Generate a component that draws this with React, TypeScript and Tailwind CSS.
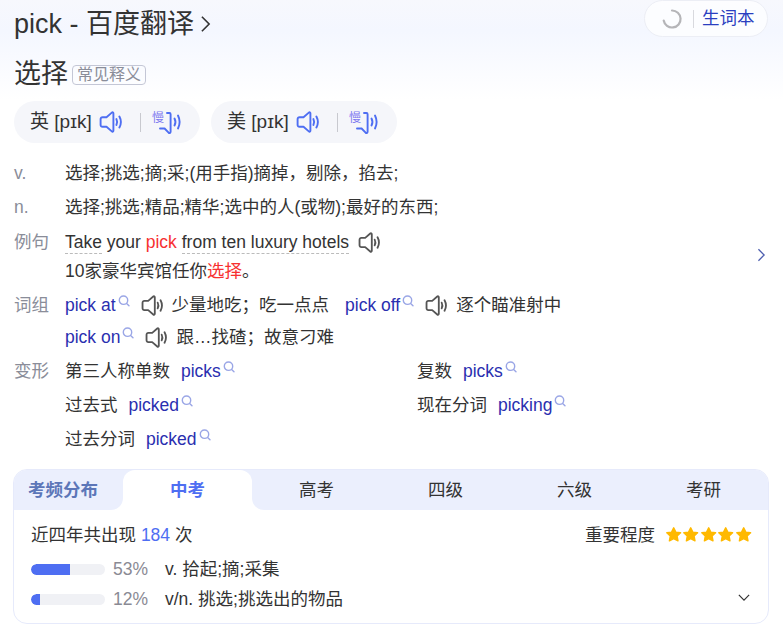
import { Fragment } from 'react'

function Speaker({ className }: { className: string }) {
  return (
    <svg viewBox="0 0 24 24" fill="none" stroke="currentColor" className={className}>
      <path
        d="M3.5 7.2h4L12.8 2.6c.7-.6 1.6-.2 1.6.7v17.4c0 .9-.9 1.3-1.6.7L7.5 16.8h-4c-1.1 0-1.9-.8-1.9-1.9V9.1c0-1.1.8-1.9 1.9-1.9z"
        strokeWidth="1.9"
        strokeLinejoin="round"
      />
      <path d="M17.4 9c1 2 1 4 0 6" strokeWidth="1.9" strokeLinecap="round" />
      <path d="M20.4 6.5c1.9 3.5 1.9 7.5 0 11" strokeWidth="1.9" strokeLinecap="round" />
    </svg>
  )
}

function SlowSpeaker() {
  return (
    <span className="relative block h-[26px] w-[31px]">
      <span className="absolute left-0 top-[2px] text-[12px] leading-[14px] text-[#7d78f0]">慢</span>
      <svg viewBox="0 0 31 26" fill="none" stroke="currentColor" className="absolute inset-0 h-[26px] w-[31px] text-[#4e6ef2]">
        <path d="M15 4h2.4c.8 0 1.2.5 1.2 1.2v17.6c0 1.3-1.2 1.6-2 .9l-4-4.2H8" strokeWidth="1.9" strokeLinejoin="round" strokeLinecap="round" />
        <path d="M22.5 9.5c1.1 2 1.1 5 0 7" strokeWidth="1.9" strokeLinecap="round" />
        <path d="M26 6.5c2 4 2 9 0 13" strokeWidth="1.9" strokeLinecap="round" />
      </svg>
    </span>
  )
}

function Lens() {
  return (
    <svg viewBox="0 0 12 12" fill="none" stroke="#9aa6e6" strokeWidth="1.4" className="ml-[2px] h-[12px] w-[12px] -translate-y-[4px]">
      <circle cx="5.5" cy="5.2" r="4.2" />
      <path d="M8.6 8.4l2.4 2.4" strokeLinecap="round" />
    </svg>
  )
}

function Star() {
  return (
    <svg viewBox="0 0 24 24" fill="#ffb900" stroke="#ffb900" strokeWidth="2" strokeLinejoin="round" className="h-[17.4px] w-[17.4px]">
      <path d="M12 2.5l2.9 6 6.6.9-4.8 4.5 1.2 6.6-5.9-3.2-5.9 3.2 1.2-6.6-4.8-4.5 6.6-.9z" />
    </svg>
  )
}

function Pill({ region }: { region: string }) {
  return (
    <div className="flex h-[42px] w-[186px] items-center rounded-[21px] bg-[#f5f6fa] pl-[16px]">
      <span className="w-[69px] whitespace-nowrap text-[19px] text-[#333]">{region} [pɪk]</span>
      <Speaker className="h-[24px] w-[24px] text-[#4e6ef2]" />
      <span className="ml-[17px] h-[19px] w-px bg-[#c8c9cf]" />
      <span className="ml-[11px]">
        <SlowSpeaker />
      </span>
    </div>
  )
}

function Row({ label, className, children }: { label: string; className: string; children: React.ReactNode }) {
  return (
    <div className={`flex ${className}`}>
      <span className="w-[51px] shrink-0 text-[#8a8d99]">{label}</span>
      <div className="min-w-0 flex-1">{children}</div>
    </div>
  )
}

function Word({ text }: { text: string }) {
  return (
    <span className="inline-flex items-center text-[#2a2fb0]">
      {text}
      <Lens />
    </span>
  )
}

function Phrase({ word, meaning }: { word: string; meaning: string }) {
  return (
    <span className="inline-flex items-center">
      <Word text={word} />
      <Speaker className="ml-[11px] h-[23px] w-[23px] text-[#555]" />
      <span className="ml-[8px] mr-[16px]">{meaning}</span>
    </span>
  )
}

function Form({ name, word }: { name: string; word: string }) {
  return (
    <div className="flex h-[34px] items-center gap-[11px]">
      <span>{name}</span>
      <Word text={word} />
    </div>
  )
}

function Bar({ percent, fill, text }: { percent: string; fill: number; text: string }) {
  return (
    <div className="flex h-[30px] items-center">
      <div className="h-[11px] w-[74px] overflow-hidden rounded-full bg-[#f0f1f5]">
        <div className="h-full rounded-l-full bg-[#4e6ef2]" style={{ width: fill }} />
      </div>
      <span className="ml-[8px] w-[52px] text-[#8a8a94]">{percent}</span>
      <span>{text}</span>
    </div>
  )
}

export default function App() {
  return (
    <div className="relative h-[624px] w-[783px] overflow-hidden bg-gradient-to-b from-[#f7f8fd] via-[#f4f7ff] via-[5%] to-white to-[16%] pl-[14px] font-['Liberation_Sans','Noto_Sans_CJK_SC',sans-serif] text-[17.5px] text-[#333]">
      <div className="absolute right-[15px] top-0 flex h-[37px] w-[124px] items-center rounded-[19px] border border-[#eceef5] bg-white/70 pl-[17px]">
        <svg viewBox="0 0 20 20" fill="none" stroke="#b5b5b8" strokeWidth="2.2" className="h-[20px] w-[20px]">
          <path d="M10 1.5a8.5 8.5 0 1 1-8.3 10" strokeLinecap="round" />
        </svg>
        <span className="ml-[11px] h-[18px] w-px bg-[#d8d9de]" />
        <span className="ml-[8px] text-[#2a3ec0]">生词本</span>
      </div>

      <div className="flex h-[48px] items-center text-[27px]">
        pick - 百度翻译
        <svg viewBox="0 0 12 20" fill="none" stroke="#333" strokeWidth="1.8" className="ml-[6px] h-[18px] w-[11px]">
          <path d="M2 2l8 8-8 8" />
        </svg>
      </div>

      <div className="mt-[8px] flex h-[36px] items-center">
        <span className="text-[27px]">选择</span>
        <span className="ml-[4px] mt-[2px] rounded-[4px] border border-[#c4c7d6] px-[4px] text-[16px] leading-[18px] text-[#8a8d99]">常见释义</span>
      </div>

      <div className="mt-[9px] flex gap-[11px]">
        <Pill region="英" />
        <Pill region="美" />
      </div>

      <div className="mt-[13px] leading-[34px]">
        <Row label="v." className="h-[34px]">选择;挑选;摘;采;(用手指)摘掉，剔除，掐去;</Row>
        <Row label="n." className="h-[34px]">选择;挑选;精品;精华;选中的人(或物);最好的东西;</Row>

        <Row label="例句" className="mt-[4px] h-[61px] leading-[28px]">
          <div className="flex h-[29px] items-center">
            <span className="whitespace-pre leading-[23px]">
              <span className="border-b border-dashed border-[#bbb] pb-[1px]">Take</span> your <span className="text-[#f73131]">pick</span>{' '}
              <span className="border-b border-dashed border-[#bbb] pb-[1px]">from ten luxury hotels</span>
            </span>
            <Speaker className="ml-[9px] h-[23px] w-[23px] text-[#555]" />
          </div>
          <div>
            10家豪华宾馆任你<span className="text-[#f73131]">选择</span>。
          </div>
        </Row>

        <Row label="词组" className="h-[65px] leading-[32px]">
          <div className="flex h-[32px]">
            <Phrase word="pick at" meaning="少量地吃；吃一点点" />
            <Phrase word="pick off" meaning="逐个瞄准射中" />
          </div>
          <div className="flex h-[32px]">
            <Phrase word="pick on" meaning="跟…找碴；故意刁难" />
          </div>
        </Row>

        <Row label="变形" className="">
          <div className="grid grid-cols-[352px_1fr]">
            {[
              ['第三人称单数', 'picks', '复数', 'picks'],
              ['过去式', 'picked', '现在分词', 'picking'],
            ].map(([a, b, c, d]) => (
              <Fragment key={a}>
                <Form name={a} word={b} />
                <Form name={c} word={d} />
              </Fragment>
            ))}
            <Form name="过去分词" word="picked" />
          </div>
        </Row>
      </div>

      <svg viewBox="0 0 10 16" fill="none" stroke="#4e5fb0" strokeWidth="1.5" className="absolute left-[757px] top-[248px] h-[14px] w-[9px]">
        <path d="M1.5 1.5L8 8l-6.5 6.5" />
      </svg>

      <div className="absolute left-[13px] top-[469px] h-[155px] w-[756px] overflow-hidden rounded-[14px] border border-[#e6eafb] bg-white">
        <div className="flex h-[40px] leading-[40px]">
          <span className="w-[109px] rounded-br-[12px] bg-[#ebeffd] pl-[14px] font-bold text-[#5c76b8]">考频分布</span>
          <div className="w-[129px] bg-gradient-to-b from-[#ebeffd] from-50% to-white to-50%">
            <div className="rounded-t-[12px] bg-white text-center font-bold text-[#4e6ef2]">中考</div>
          </div>
          <span className="w-[129px] rounded-bl-[12px] bg-[#ebeffd] text-center">高考</span>
          <span className="w-[129px] bg-[#ebeffd] text-center">四级</span>
          <span className="w-[129px] bg-[#ebeffd] text-center">六级</span>
          <span className="w-[129px] bg-[#ebeffd] text-center">考研</span>
        </div>
        <div className="px-[17px]">
          <div className="mt-[6px] flex h-[38px] items-center justify-between">
            <span>
              近四年共出现 <span className="text-[#4e6ef2]">184</span> 次
            </span>
            <div className="mr-[-1px] flex items-center">
              <span className="mr-[10px]">重要程度</span>
              <Star />
              <Star />
              <Star />
              <Star />
              <Star />
            </div>
          </div>
          <div className="relative">
            <Bar percent="53%" fill={39} text="v. 拾起;摘;采集" />
            <Bar percent="12%" fill={9} text="v/n. 挑选;挑选出的物品" />
            <svg viewBox="0 0 14 8" fill="none" stroke="#333" strokeWidth="1.4" className="absolute right-[1px] top-[40px] h-[7px] w-[12px]">
              <path d="M1 1l6 6 6-6" />
            </svg>
          </div>
        </div>
      </div>
    </div>
  )
}
